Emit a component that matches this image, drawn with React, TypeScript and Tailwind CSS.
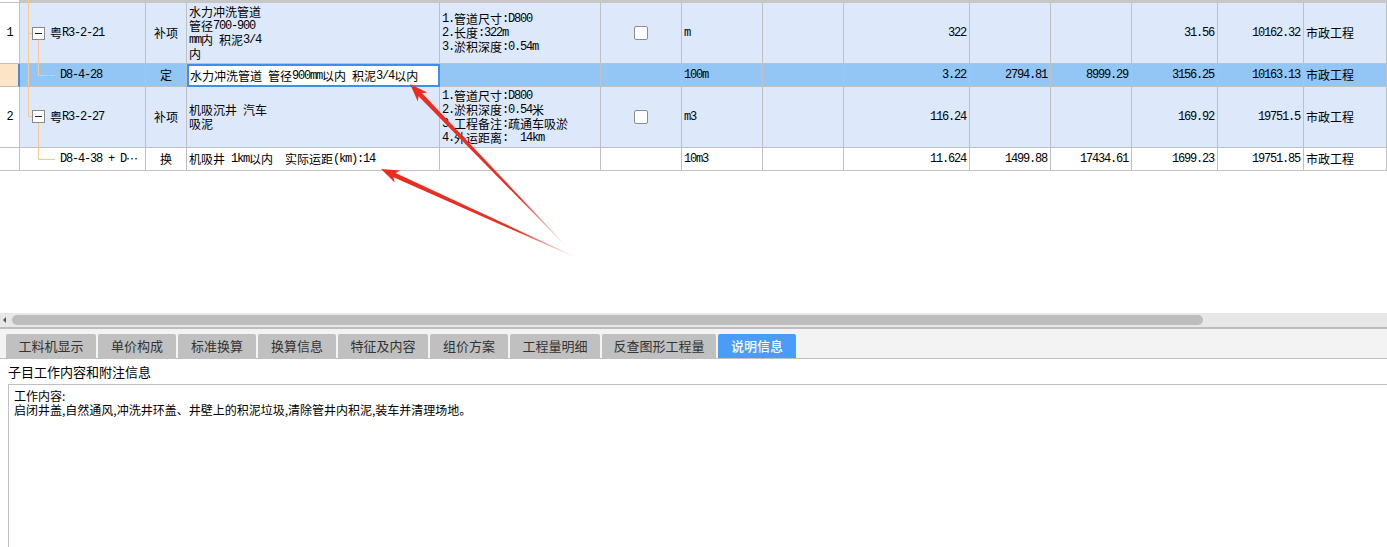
import React from 'react'

const MONO = "font-['Liberation_Mono',monospace] tracking-[-1.2px]"
const CJK = "font-['Noto_Sans_CJK_SC',sans-serif]"
const COLS =
  'grid grid-cols-[20px_126px_41px_253px_161px_81px_81px_81px_126px_81px_81px_86px_86px_83px]'
const CELL = 'border-r border-b border-[#c0c0c0] flex items-center overflow-hidden whitespace-pre'

// SimSun-like mix: CJK 12px, latin runs 6px wide
function T({ s }: { s: string }) {
  const parts = s.split(/([\x20-\x7e]+)/)
  return (
    <>
      {parts.map((p, i) =>
        !p ? null : /^[\x20-\x7e]+$/.test(p) ? (
          <span key={i} className={MONO}>
            {p}
          </span>
        ) : (
          <span key={i}>{p}</span>
        )
      )}
    </>
  )
}

function Lines({ ls }: { ls: string[] }) {
  return (
    <div className="flex flex-col">
      {ls.map((l) => (
        <div key={l} className="h-[14px] leading-[14px] flex items-center">
          <T s={l} />
        </div>
      ))}
    </div>
  )
}

type Row = {
  num: string
  code: string
  child: boolean
  type: string
  name: string[]
  feat: string[]
  check: boolean
  unit: string
  qty: string
  p1: string
  p2: string
  p3: string
  total: string
  tall: boolean
  bg: string
  selected?: boolean
}

const rows: Row[] = [
  {
    num: '1',
    code: '粤R3-2-21',
    child: false,
    type: '补项',
    name: ['水力冲洗管道', '管径700-900', 'mm内 积泥3/4', '内'],
    feat: ['1.管道尺寸:D800', '2.长度:322m', '3.淤积深度:0.54m'],
    check: true,
    unit: 'm',
    qty: '322',
    p1: '',
    p2: '',
    p3: '31.56',
    total: '10162.32',
    tall: true,
    bg: 'bg-[#dde9fb]',
  },
  {
    num: '',
    code: 'D8-4-28',
    child: true,
    type: '定',
    name: ['水力冲洗管道 管径900mm以内 积泥3/4以内'],
    feat: [],
    check: false,
    unit: '100m',
    qty: '3.22',
    p1: '2794.81',
    p2: '8999.29',
    p3: '3156.25',
    total: '10163.13',
    tall: false,
    bg: 'bg-[#93c6f4]',
    selected: true,
  },
  {
    num: '2',
    code: '粤R3-2-27',
    child: false,
    type: '补项',
    name: ['机吸沉井 汽车', '吸泥'],
    feat: ['1.管道尺寸:D800', '2.淤积深度:0.54米', '3.工程备注:疏通车吸淤', '4.外运距离:  14km'],
    check: true,
    unit: 'm3',
    qty: '116.24',
    p1: '',
    p2: '',
    p3: '169.92',
    total: '19751.5',
    tall: true,
    bg: 'bg-[#dde9fb]',
  },
  {
    num: '',
    code: 'D8-4-38 + D…',
    child: true,
    type: '换',
    name: ['机吸井 1km以内  实际运距(km):14'],
    feat: [],
    check: false,
    unit: '10m3',
    qty: '11.624',
    p1: '1499.88',
    p2: '17434.61',
    p3: '1699.23',
    total: '19751.85',
    tall: false,
    bg: 'bg-white',
  },
]

function Num({ v }: { v: string }) {
  return (
    <div className={`${CELL} justify-end pr-[3px]`}>
      <T s={v} />
    </div>
  )
}

function GridRow({ r }: { r: Row }) {
  return (
    <div className={`${COLS} ${r.tall ? 'h-[61px]' : 'h-[23px]'} ${r.bg} leading-[14px]`}>
      <div
        className={
          r.selected
            ? 'bg-[#fde4c7] border-b border-[#c0c0c0] border-r-2 border-r-[#3c8cf0]'
            : `${CELL} bg-white justify-center`
        }
      >
        {r.num && <T s={r.num} />}
      </div>
      <div className={`${CELL} ${r.child ? 'pl-[40px]' : 'pl-[30px]'}`}>
        <T s={r.code} />
      </div>
      <div className={`${CELL} justify-center`}>{r.type}</div>
      {r.selected ? (
        <div className="flex items-center bg-white border-2 border-[#3c8ef0] pl-[1px] whitespace-pre overflow-hidden">
          <T s={r.name[0]} />
        </div>
      ) : (
        <div className={`${CELL} pl-[2px]`}>
          <Lines ls={r.name} />
        </div>
      )}
      <div className={`${CELL} pl-[2px]`}>
        <Lines ls={r.feat} />
      </div>
      <div className={`${CELL} justify-center`}>
        {r.check && <div className="w-[14px] h-[14px] border border-[#8c8c8c] rounded-[2px] bg-white" />}
      </div>
      <div className={`${CELL} pl-[2px]`}>
        <T s={r.unit} />
      </div>
      <div className={CELL} />
      <Num v={r.qty} />
      <Num v={r.p1} />
      <Num v={r.p2} />
      <Num v={r.p3} />
      <Num v={r.total} />
      <div className={`${CELL} pl-[2px]`}>市政工程</div>
    </div>
  )
}

function Tree() {
  const o = '#f9c88b'
  return (
    <svg className="absolute left-0 top-0 pointer-events-none" width="70" height="171">
      <line x1="28.5" y1="0" x2="28.5" y2="116.5" stroke={o} />
      <line x1="28.5" y1="33.5" x2="32.5" y2="33.5" stroke={o} />
      <line x1="28.5" y1="116.5" x2="32.5" y2="116.5" stroke={o} />
      <line x1="38.5" y1="39.5" x2="38.5" y2="75.5" stroke={o} />
      <line x1="38.5" y1="75.5" x2="55" y2="75.5" stroke={o} />
      <line x1="38.5" y1="122.5" x2="38.5" y2="159.5" stroke={o} />
      <line x1="38.5" y1="159.5" x2="55" y2="159.5" stroke={o} />
      {[27.5, 110.5].map((y) => (
        <g key={y}>
          <rect x="32.5" y={y} width="12" height="12" fill="white" stroke="#8a8a8a" />
          <line x1="35" y1={y + 6} x2="42" y2={y + 6} stroke="#222" />
        </g>
      ))}
    </svg>
  )
}

function Arrow({ t, h, id }: { t: [number, number]; h: [number, number]; id: string }) {
  const dx = h[0] - t[0]
  const dy = h[1] - t[1]
  const len = Math.hypot(dx, dy)
  const ux = dx / len
  const uy = dy / len
  const nx = -uy
  const ny = ux
  const L = 18
  const W = 6.5
  const bx = h[0] - ux * L
  const by = h[1] - uy * L
  const sx = bx + ux * 5
  const sy = by + uy * 5
  const p = (x: number, y: number) => `${x.toFixed(1)},${y.toFixed(1)}`
  const shaft = [
    p(t[0] + nx * 0.3, t[1] + ny * 0.3),
    p(sx + nx * 2.4, sy + ny * 2.4),
    p(sx - nx * 2.4, sy - ny * 2.4),
    p(t[0] - nx * 0.3, t[1] - ny * 0.3),
  ].join(' ')
  const head = [p(h[0], h[1]), p(bx + nx * W, by + ny * W), p(sx, sy), p(bx - nx * W, by - ny * W)].join(' ')
  return (
    <g>
      <defs>
        <linearGradient id={id} gradientUnits="userSpaceOnUse" x1={t[0]} y1={t[1]} x2={h[0]} y2={h[1]}>
          <stop offset="0" stopColor="#ee2b1f" stopOpacity="0" />
          <stop offset="0.3" stopColor="#ee2b1f" stopOpacity="1" />
        </linearGradient>
      </defs>
      <polygon points={shaft} fill={`url(#${id})`} />
      <polygon points={head} fill="#ee2b1f" />
    </g>
  )
}

const tabs: [string, string][] = [
  ['工料机显示', 'w-[90px]'],
  ['单价构成', 'w-[78px]'],
  ['标准换算', 'w-[78px]'],
  ['换算信息', 'w-[78px]'],
  ['特征及内容', 'w-[90px]'],
  ['组价方案', 'w-[78px]'],
  ['工程量明细', 'w-[90px]'],
  ['反查图形工程量', 'w-[114px]'],
  ['说明信息', 'w-[78px]'],
]

export default function App() {
  return (
    <div className={`relative w-[1387px] h-[547px] overflow-hidden bg-white flex flex-col text-[12px] text-black ${CJK}`}>
      {/* grid */}
      <div className="relative h-[313px] shrink-0">
        <div className="flex h-[3px]">
          <div className="w-[20px] border-r border-b border-[#c0c0c0]" />
          <div className="flex-1 bg-[#c6c6c6]" />
        </div>
        {rows.map((r) => (
          <GridRow key={r.code} r={r} />
        ))}
        <Tree />
      </div>

      {/* horizontal scrollbar */}
      <div className="h-[14px] shrink-0 bg-[#e7e7e7] flex items-center">
        <div className="ml-[3px] w-0 h-0 border-y-[3px] border-y-transparent border-r-[3px] border-r-[#555]" />
        <div className="ml-[6px] w-[1191px] h-[10px] rounded-full bg-[#bdbdbd]" />
      </div>

      {/* tabs */}
      <div className="h-[32px] shrink-0 border-t-2 border-[#bdbdbd] border-b border-b-[#c0c0c0] bg-[#f3f3f3] flex items-end gap-[2px] pl-[6px]">
        {tabs.map(([label, w]) => {
          const active = label === '说明信息'
          return (
            <div
              key={label}
              className={`${w} h-[24px] rounded-t-[2px] flex items-center justify-center text-[13px] ${
                active ? 'bg-[#4a9cf8] text-white font-medium' : 'bg-[#c0c0c0] text-[#333]'
              }`}
            >
              {label}
            </div>
          )
        })}
      </div>

      <div className="h-[25px] shrink-0 flex items-center pl-[8px] text-[13px]">子目工作内容和附注信息</div>

      <div className="flex-1 ml-[8px] border-t border-l border-[#c0c0c0] pt-[4px] pl-[5px]">
        <div className="h-[14px] leading-[14px]">工作内容:</div>
        <div className="h-[14px] leading-[14px]">
          启闭井盖,自然通风,冲洗井环盖、井壁上的积泥垃圾,清除管井内积泥,装车并清理场地。
        </div>
      </div>

      <svg className="absolute left-0 top-0 pointer-events-none" width="1387" height="547">
        <Arrow id="a1" t={[566, 246]} h={[410, 84]} />
        <Arrow id="a2" t={[575, 257]} h={[381, 169]} />
      </svg>
    </div>
  )
}
